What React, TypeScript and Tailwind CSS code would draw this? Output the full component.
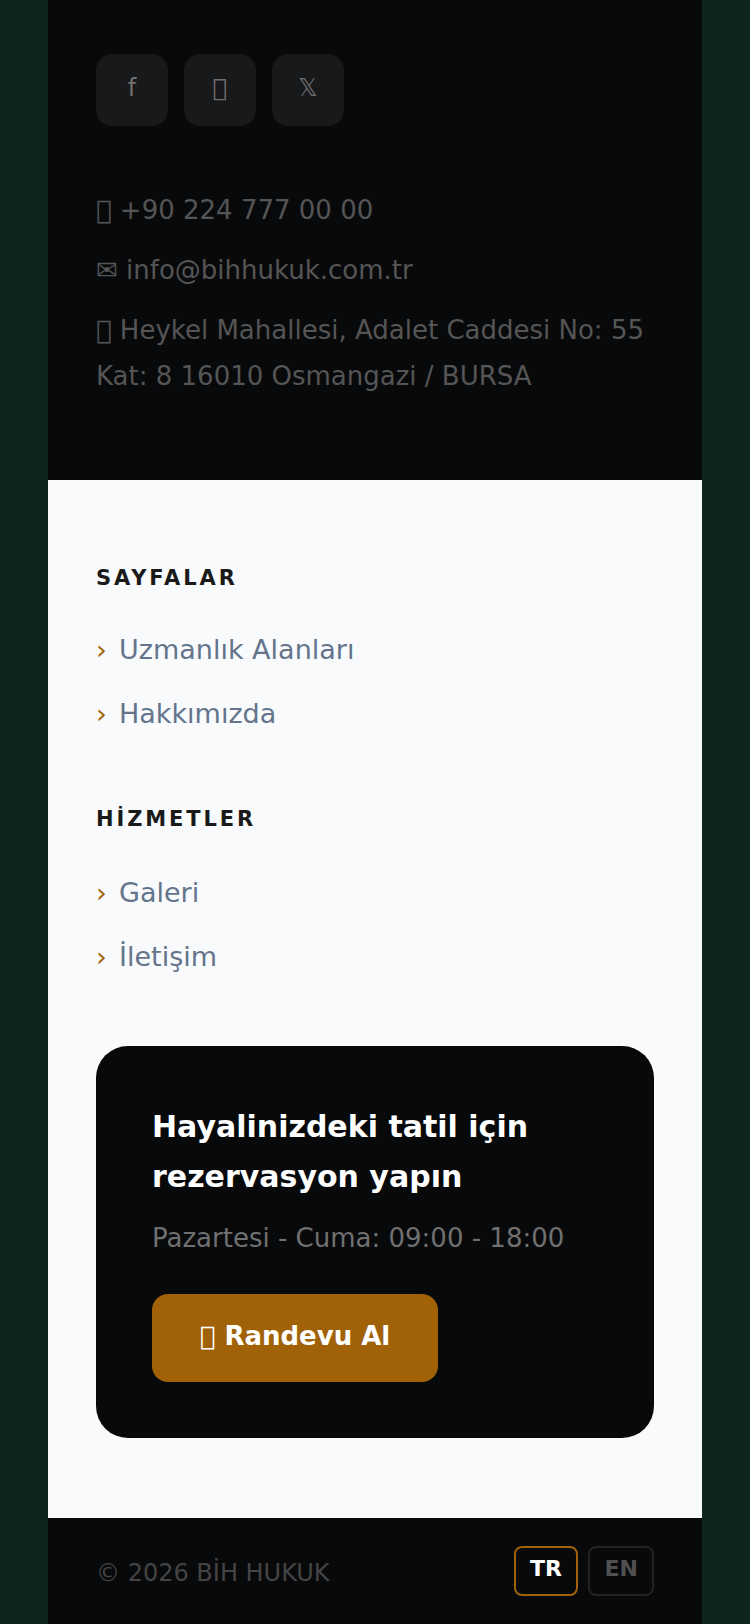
import React from "react";

const font = { fontFamily: '"DejaVu Sans", sans-serif' };

function LinkList({ links }: { links: string[] }) {
  return (
    <ul className="flex flex-col gap-[22px]">
      {links.map((l) => (
        <li key={l} className="flex items-center h-[42px] text-[27px] leading-[42px] text-[#64748b]">
          <span className="text-[#a16207] text-[27px] w-[23px]">›</span>
          <span>{l}</span>
        </li>
      ))}
    </ul>
  );
}

export default function App() {
  return (
    <div className="h-[1624px] overflow-hidden bg-[#10241f] px-[48px]" style={font}>
      <div className="h-full flex flex-col">
        <section className="h-[480px] shrink-0 bg-[#08090b] px-[48px] pt-[54px]">
          <div className="flex gap-[16px]">
            {["f", "\uF16D", "𝕏"].map((s) => (
              <div key={s} className="w-[72px] h-[72px] rounded-[16px] bg-[#18191b] flex justify-center pt-[20px] text-[24px] leading-[28px] text-[#707070]">
                {s}
              </div>
            ))}
          </div>
          <div className="mt-[61px] flex flex-col text-[26px] text-[#555555]">
            <p className="leading-[46px]">{"\uF095"} +90 224 777 00 00</p>
            <p className="leading-[46px] mt-[14px]">✉ info@bihhukuk.com.tr</p>
            <p className="leading-[46px] mt-[14px]">{"\uF3C5"} Heykel Mahallesi, Adalet Caddesi No: 55 Kat: 8 16010 Osmangazi / BURSA</p>
          </div>
        </section>
        <section className="flex-1 bg-[#f8fafc] px-[48px] pt-[85px]">
          <div className="flex flex-col">
            <h3 className="text-[21px] leading-[26px] font-bold tracking-[2.9px] text-[#1a1a1a] mb-[38px]">SAYFALAR</h3>
            <LinkList links={["Uzmanlık Alanları", "Hakkımızda"]} />
            <h3 className="mt-[71px] text-[21px] leading-[26px] font-bold tracking-[2.9px] text-[#1a1a1a] mb-[40px]">HİZMETLER</h3>
            <LinkList links={["Galeri", "İletişim"]} />
          </div>
          <div className="mt-[68px] h-[392px] rounded-[32px] bg-[#08090b] px-[56px] pt-[56px]">
            <h2 className="text-[30px] leading-[50px] font-bold text-white">Hayalinizdeki tatil için rezervasyon yapın</h2>
            <p className="mt-[16px] text-[26px] leading-[40px] text-[#707070]">Pazartesi - Cuma: 09:00 - 18:00</p>
            <div className="mt-[36px] w-[286px] h-[88px] rounded-[16px] bg-[#a16207] flex justify-center pt-[25px] text-[26px] leading-[34px] font-bold text-white">
              {"\uF073"} Randevu Al
            </div>
          </div>
        </section>
        <footer className="h-[106px] shrink-0 bg-[#08090b] px-[48px] flex items-start justify-between pt-[28px]">
          <span className="text-[24px] leading-[54px] text-[#444444]">© 2026 BİH HUKUK</span>
          <div className="flex gap-[10.6px]">
            <div className="w-[63.4px] h-[50px] rounded-[8px] border-2 border-[#a16207] flex justify-center pt-[6px] text-[22px] leading-[30px] font-bold text-white">TR</div>
            <div className="w-[65.7px] h-[50px] rounded-[8px] border-2 border-[#222222] flex justify-center pt-[6px] text-[22px] leading-[30px] font-bold text-[#505050]">EN</div>
          </div>
        </footer>
      </div>
    </div>
  );
}
